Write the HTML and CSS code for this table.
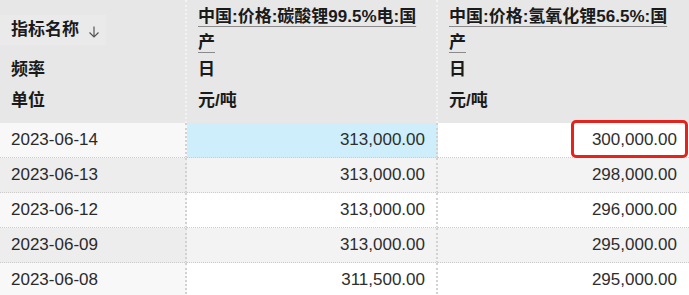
FILE: index.html
```html
<!DOCTYPE html>
<html lang="zh">
<head>
<meta charset="utf-8">
<link rel="stylesheet" href="styles.css">
</head>
<body>
<div class="table">
  <div class="hd c1">
    <div class="h-name"><span class="name-box">指标名称 <svg class="arrow" width="12" height="12" viewBox="0 0 12 12"><path d="M6 0.5V11 M1.5 6.5L6 11L10.5 6.5" fill="none" stroke="#555" stroke-width="1.2"/></svg></span></div>
    <div class="h-freq">频率</div>
    <div class="h-unit">单位</div>
  </div>
  <div class="hd c2">
    <div class="h-name"><span class="title">中国:价格:碳酸锂99.5%电:国产</span></div>
    <div class="h-freq">日</div>
    <div class="h-unit">元/吨</div>
  </div>
  <div class="hd c3">
    <div class="h-name"><span class="title">中国:价格:氢氧化锂56.5%:国产</span></div>
    <div class="h-freq">日</div>
    <div class="h-unit">元/吨</div>
  </div>

  <div class="cell date odd first">2023-06-14</div>
  <div class="cell num c2 sel">313,000.00</div>
  <div class="cell num c3 light"><span>300,000.00</span><span class="mark"></span></div>

  <div class="cell date even">2023-06-13</div>
  <div class="cell num c2 grey">313,000.00</div>
  <div class="cell num c3 grey">298,000.00</div>

  <div class="cell date odd">2023-06-12</div>
  <div class="cell num c2 light">313,000.00</div>
  <div class="cell num c3 light">296,000.00</div>

  <div class="cell date even">2023-06-09</div>
  <div class="cell num c2 grey">313,000.00</div>
  <div class="cell num c3 grey">295,000.00</div>

  <div class="cell date odd">2023-06-08</div>
  <div class="cell num c2 light">311,500.00</div>
  <div class="cell num c3 light">295,000.00</div>
</div>
</body>
</html>
```

FILE: styles.css
```css
html, body {
  margin: 0;
  padding: 0;
  background: #ffffff;
}
body {
  font-family: "Liberation Sans", "Noto Sans CJK SC", sans-serif;
  color: #2b2b2b;
  overflow: hidden;
}
.table {
  display: grid;
  grid-template-columns: 187px 251px 1fr;
  grid-template-rows: 123px repeat(5, 35px);
  width: 689px;
}
.hd {
  box-sizing: border-box;
  background: #e7e7e7;
  font-weight: bold;
  font-size: 17px;
  color: #1a1a1a;
  padding: 4px 11px 0 11px;
  display: flex;
  flex-direction: column;
}
.hd.c1, .hd.c2 {
  border-right: 2px dotted #f3f3f3;
}
.hd.c3 {
  padding-left: 11px;
  padding-right: 14px;
}
.h-name {
  height: 52px;
  line-height: 26px;
  display: flex;
  align-items: center;
}
.name-box {
  display: inline-flex;
  align-items: center;
  gap: 9px;
  background: #eaeaea;
  margin-left: -11px;
  padding: 2px 6px 2px 11px;
}
.arrow {
  margin-top: 3px;
}
.title {
  text-decoration: underline;
  text-decoration-color: #8a8a8a;
  text-decoration-thickness: 1px;
  text-underline-offset: 4px;
}
.h-freq {
  height: 28px;
  line-height: 28px;
}
.h-unit {
  height: 33px;
  line-height: 33px;
}
.cell {
  box-sizing: border-box;
  font-size: 17px;
  line-height: 34px;
  height: 35px;
  border-bottom: 1px dotted #cccccc;
  white-space: nowrap;
}
.date {
  padding-left: 11px;
  border-right: 2px dotted #d2d2d2;
  color: #2a2a2a;
}
.date.odd { background: #f8f8f8; }
.date.even { background: #ededed; }
.num {
  text-align: right;
  color: #2e2e2e;
}
.num.c2 {
  padding-right: 11px;
  border-right: 2px dotted #d2d2d2;
}
.num.c3 {
  padding-right: 12px;
  position: relative;
}
.light { background: #ffffff; }
.grey { background: #f3f3f3; }
.sel { background: #cdeefa; }
.mark {
  position: absolute;
  top: -3px;
  bottom: -1px;
  right: 1px;
  width: 117px;
  box-sizing: border-box;
  border: 3px solid #e5231d;
  border-radius: 5px;
}
```
